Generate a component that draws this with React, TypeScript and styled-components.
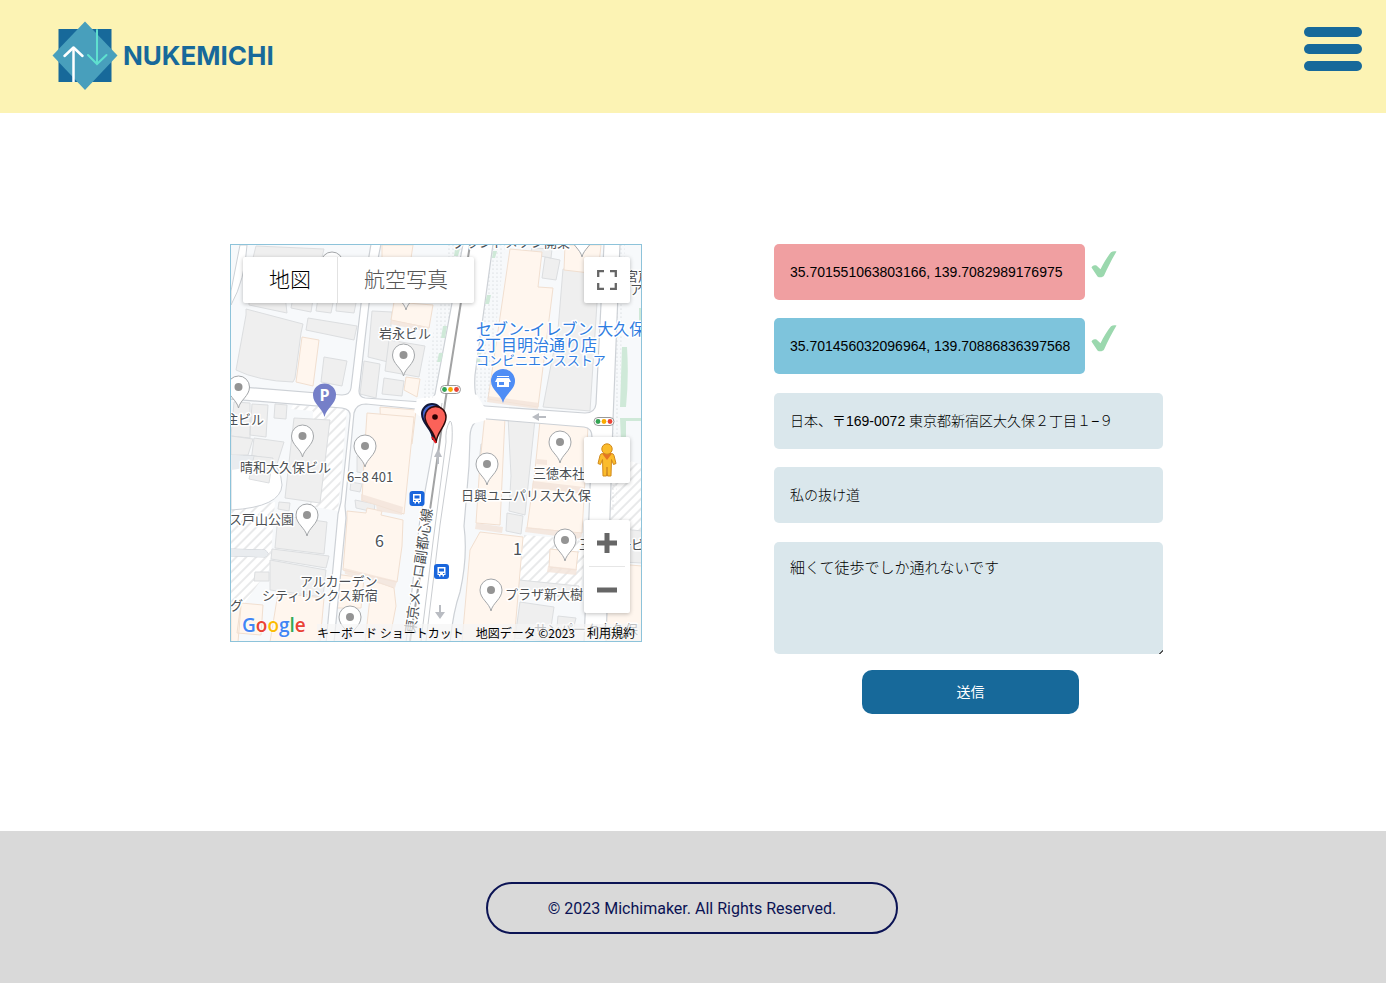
import React from "react";
import styled, { createGlobalStyle } from "styled-components";

const GlobalStyle = createGlobalStyle`
  * { box-sizing: border-box; }
  body { margin: 0; background: #fff; font-family: "Liberation Sans", "Noto Sans CJK JP", sans-serif; }
  button, input, textarea { font: inherit; }
`;

const Page = styled.div`
  min-height: 100vh;
  display: flex;
  flex-direction: column;
`;

const Header = styled.header`
  display: flex;
  justify-content: space-between;
  align-items: flex-start;
  padding: 21px 24px 22px 52px;
  background: #fcf3b4;
`;

const Brand = styled.a`
  display: flex;
  align-items: center;
  gap: 5px;
  color: #17699a;
  font: 700 26px/32px Inter, sans-serif;
  text-decoration: none;
  svg { display: block; }
`;

const MenuButton = styled.button`
  display: flex;
  flex-direction: column;
  gap: 7px;
  width: 58px;
  margin-top: 6px;
  padding: 0;
  border: 0;
  background: none;
  cursor: pointer;
`;

const MenuBar = styled.span`
  height: 10px;
  border-radius: 5px;
  background: #17699a;
`;

const Main = styled.main`
  flex: 1;
  display: grid;
  grid-template-columns: 412fr 389fr;
  align-items: start;
  gap: 132px;
  padding: 131px 223px 117px 230px;
  @media (max-width: 1000px) {
    grid-template-columns: 1fr;
    gap: 40px;
    padding: 40px 24px;
  }
`;

const MapFrame = styled.section`
  position: relative;
  height: 398px;
  border: 1px solid #8dc3da;
  overflow: hidden;
`;

const MapCanvas = styled.svg`
  display: block;
  width: 100%;
  height: 100%;
`;

const Controls = styled.div`
  position: absolute;
  display: flex;
  background: #fff;
  border-radius: 2px;
  box-shadow: 0 1px 4px rgba(0, 0, 0, 0.25);
`;

const TypeControls = styled(Controls)`
  top: 12px;
  left: 12px;
`;

const SideControls = styled(Controls)<{ $edge: "top" | "bottom"; $offset: number }>`
  right: 11px;
  ${(p) => p.$edge}: ${(p) => p.$offset}px;
  flex-direction: column;
`;

const TypeButton = styled.button<{ $active?: boolean }>`
  height: 46px;
  padding: 0 26px 5px;
  border: 0;
  border-left: ${(p) => (p.$active ? "0" : "1px solid #e2e2e2")};
  background: none;
  color: ${(p) => (p.$active ? "#000" : "#565656")};
  font: 300 21px/30px "Noto Sans CJK JP", sans-serif;
`;

const IconButton = styled.button`
  display: grid;
  place-items: center;
  width: 46px;
  height: 46px;
  padding: 0;
  border: 0;
  background: none;
`;

const ZoomDivider = styled.span`
  height: 1px;
  margin: 0 5px;
  background: #e6e6e6;
`;

const GoogleLink = styled.a`
  position: absolute;
  left: 11px;
  bottom: 2px;
  font: 600 19px/28px "Open Sans", sans-serif;
  text-decoration: none;
  text-shadow: 0 0 2px #fff, 0 0 2px #fff;
`;

const Letter = styled.span<{ $color: string }>`
  color: ${(p) => p.$color};
`;

const MapCredits = styled.div`
  position: absolute;
  right: 0;
  bottom: 0;
  display: flex;
  gap: 12px;
  padding: 0 6px 0 0;
  background: rgba(245, 245, 245, 0.7);
  font: 400 12px/17px "Noto Sans CJK JP", sans-serif;
  color: #000;
  white-space: nowrap;
  button { padding: 0; border: 0; background: none; }
  a { color: inherit; text-decoration: none; }
`;

const Form = styled.form`
  display: flex;
  flex-direction: column;
`;

const FieldGroup = styled.div`
  display: flex;
  flex-direction: column;
  gap: 18px;
  margin-bottom: 19px;
`;

const PointRow = styled.div`
  display: flex;
  align-items: flex-start;
  gap: 6px;
  svg { flex: none; margin-top: 7px; }
`;

const TextField = styled.input<{ $tone?: string; $short?: boolean }>`
  width: ${(p) => (p.$short ? "80%" : "100%")};
  height: 56px;
  padding: 0 15px 2px 16px;
  border: 0;
  border-radius: 5px;
  background: ${(p) => p.$tone || "#dae7ec"};
  color: #000;
  font-family: "Liberation Sans", "Noto Sans CJK JP", sans-serif;
  font-weight: 300;
  font-size: 14px;
  ${(p) => p.$short && "padding-bottom: 0;"}
`;

const Comment = styled.textarea`
  display: block;
  height: 112px;
  padding: 16px;
  border: 0;
  border-radius: 5px;
  background: #dae7ec;
  color: #000;
  font-weight: 300;
  font-size: 15px;
  line-height: 20px;
  resize: vertical;
  &::-webkit-resizer {
    background: linear-gradient(135deg, transparent 86%, #555 86%, #555 92%, transparent 92%);
  }
`;

const Actions = styled.div`
  display: flex;
  justify-content: center;
  padding: 16px 0 0 4px;
`;

const Submit = styled.button`
  width: 217px;
  height: 44px;
  padding: 0 0 2px;
  border: 0;
  border-radius: 10px;
  background: #17699a;
  color: #fff;
  font-size: 14px;
`;

const Footer = styled.footer`
  display: flex;
  justify-content: center;
  padding: 51px 2px 49px 0;
  background: #d9d9d9;
`;

const Copyright = styled.p`
  width: 412px;
  margin: 0;
  padding: 13px 0 11px;
  border: 2px solid #0b1354;
  border-radius: 26px;
  color: #0b1354;
  font: 400 16px/24px Roboto, sans-serif;
  text-align: center;
`;

const Place = styled.text<{ $size?: number; $color?: string }>`
  font: 400 ${(p) => p.$size || 13}px "Noto Sans CJK JP", sans-serif;
  fill: ${(p) => p.$color || "#4c4f53"};
  stroke: #fff;
  stroke-width: 3px;
  stroke-linejoin: round;
  paint-order: stroke;
`;

const Logo = () => (
  <svg width="66" height="70" viewBox="52 21 66 70" aria-hidden="true">
    <path fill="#17699a" d="M58.5 29h53v53h-53z" />
    <path fill="#489fbc" d="M85 21.500 117.500 55.500 85 90 52.500 55.500z" />
    <path fill="none" stroke="#5fe0cf" strokeWidth="2" strokeLinecap="round" d="M97 30v34M88 55l9 9 9.500-9" />
    <path fill="none" stroke="#fff" strokeWidth="2.500" d="M73.500 82V48" />
    <path fill="none" stroke="#fff" strokeWidth="2.500" strokeLinecap="round" strokeLinejoin="round" d="M64.500 56l9-8.500 9 8.500" />
  </svg>
);

const Check = () => (
  <svg width="26" height="27" viewBox="0 0 26 27" role="img" aria-label="OK">
    <path fill="#9bd8ae" d="M.5 16.500C1 14.500 3.500 13.500 5.500 14.600L9.500 18.300C12.500 12 16.500 5.500 20 1.200 21.800 0 24 0 25.500.6 21 8 17 16 13.200 24.300 12 26.500 8.500 27 6.500 25.500z" />
  </svg>
);

const Pin = ({ x, y }: { x: number; y: number }) => (
  <g transform={`translate(${x} ${y})`}>
    <path fill="#fff" stroke="#a3a6a9" d="M0 21C-1.500 13-11 9-11 0a11 11 0 0 1 22 0C11 9 1.500 13 0 21z" />
    <circle r="4" fill="#949494" />
  </g>
);

const Signal = ({ x, y }: { x: number; y: number }) => (
  <g transform={`translate(${x} ${y})`}>
    <rect x="-10" y="-4" width="20" height="8" rx="4" fill="#fff" stroke="#999" />
    <circle cx="-6" r="2.400" fill="#34a353" />
    <circle r="2.400" fill="#f9ab00" />
    <circle cx="6" r="2.400" fill="#ea4335" />
  </g>
);

const Station = ({ x, y }: { x: number; y: number }) => (
  <g transform={`translate(${x} ${y})`}>
    <rect x="-7.500" y="-7.500" width="15" height="15" rx="3" fill="#1a66dc" />
    <path fill="#fff" d="M-4-4.500h8v8h-1.500V5h-1.500V3.500h-2V5h-1.500V3.500H-4z" />
    <path fill="#1a66dc" d="M-2.500-3h5v3h-5zM-3 1.500h1.500v1H-3zM1.500 1.500H3v1H1.500z" />
  </g>
);

const pins = [
  [403.5, 355], [238.500, 387], [302.500, 436], [365, 446], [487, 464], [560, 442],
  [307, 515], [565, 540], [491, 590], [350, 617], [332, 263], [406, 289], [582, 236],
];

const grayBlocks = [
  "M256 246l68 3-3 12-68-3z", "M246 309l57 15-2 9-6 45-2 4q-35-1-57-12l10-55z",
  "M308 318l49 8-3 14-48-10z", "M324 357l23 4-5 25-21-4z",
  "M249 297l36-2 2 18-38-8zM294 293h20l-3 19-20-4zM318 298h16l-3 15-15-2zM337 298h20l-3 15-18-2z",
  "M372 311l20 1-4 50-20-5z", "M364 361l16 3-4 34-16-4z", "M389 340l36 6-6 31-34-6z",
  "M384 378l20 3-2 15-20-2z",
  "M234 402l16 1v35l-19-2zM252 404l16 1-2 32-16-2zM275 404l12 1-1 14-12-1z",
  "M294 418l36 2-10 83-35-5z", "M231 436l22 3-5 16-17 0zM254 438l30 4-13 41-22-5z",
  "M278 515l49 7-3 32-49-6z", "M272 549l57 7-3 12-55-9z", "M270 560l56 10-3 27-53-7z",
  "M255 572h14v9h-15z", "M563 269l36 3-9 139-47-4 7-37 8-40z",
  "M545 257l15 3-4 20-14-2z", "M532 248l20 1-1 9-21-4z",
  "M508 416l27 3-10 96-16-4 2-35z", "M507 513l16 3-2 18-15-3z",
  "M481 444l20 2-2 20-20-3z", "M519 580l60 6-2 12-59-6z", "M520 602l34 5-5 34-34-3zM558 616l18 2-3 12-16-3z",
  "M357 456l20 2-3 17-17-3z", "M605 527l37 4v32l-37-2z", "M355 500l20 4-1 8-18-4z", "M351 482l11 2-2 8-10-2z",
];
const orangeBlocks = [
  "M302 337l17 3-6 46-17-4z", "M382 245h31l-3 20-28-4z", "M394 302l39 3-4 23-38-8z",
  "M406 377l14 2-3 18-13-7z", "M380 407l36 3-4 34-31-6z", "M510 249l32 3-4 35 15 1-15 119-50-8z",
  "M565 245h36l-3 29-34-4z", "M367 413l47 4-10 97-42-14 2-40z", "M347 511l19 2 1-5 15 3-1 4 22 5-1 26-5 36-54-12 4-50z",
  "M372 580l22 8 2 18-7 36h-24z", "M335 574l29 4-3 30-30 0z", "M485 414l20 3-5 108-24-2 4-60z",
  "M540 421l48 5-6 107-55-5 8-58z", "M480 532l43 5-9 105h-52l8-92z", "M550 549l28 3-2 18-27-3z",
  "M241 603l22 2-2 30-24-2zM231 605l10 1-3 36h-7z", "M278 593l46 5-4 44h-50z", "M606 563l36 3v76h-40z",
];

const MapDrawing = () => (
  <MapCanvas viewBox="231 245 410 396" preserveAspectRatio="xMidYMid slice" role="img" aria-label="地図">
    <defs>
      <pattern id="hatch" width="7" height="7" patternUnits="userSpaceOnUse" patternTransform="rotate(45)">
        <path stroke="#d2d4d6" d="M1 0v7" />
      </pattern>
      <pattern id="dots" width="4" height="4" patternUnits="userSpaceOnUse">
        <circle cx="1" cy="1" r=".6" fill="#c5cace" />
      </pattern>
    </defs>
    <path fill="#f7f9fb" d="M231 245h411v397H231z" />
    <path fill="#fff" d="M293 405l54 4-9 102-28-5 3-95-22-2zM231 510l44-8-5 66-29 40-10-2zM524 535l62 5-5 48-62-8zM614 455l28 10v67l-33-5z" />
    <path fill="url(#hatch)" d="M293 405l54 4-9 102-28-5 3-95-22-2zM231 510l44-8-5 66-29 40-10-2zM524 535l62 5-5 48-62-8zM614 455l28 10v67l-33-5z" />
    <g fill="#efefef" stroke="#dcdee0">
      {grayBlocks.map((d) => <path key={d} d={d} />)}
    </g>
    <g fill="#fff6ee" stroke="#f1dfd0">
      {orangeBlocks.map((d) => <path key={d} d={d} />)}
    </g>
    <path fill="#f3e4d9" d="M391 320l38 7-1 5-38-8zM488 396l51 7-1 6-51-7zM476 523l27 4-1 6-27-4zM533 481l51 6-1 7-51-6zM526 527l56 6-1 6-56-7zM361 494l42 13-1 8-25-4-1-6-15-4zM344 568l53 13-2 7-50-14zM548 566l29 3-1 6-29-3zM537 459l10 1v5l-11-1z" opacity=".8" />
    <path fill="#fff" stroke="#cdd1d6" d="M240 245h7q-2 35-16 60v-14zM231 457q49-8 51 28-1 22-51 25zM231 549l34 1q6 4 0 7l-34-1z" />
    <path fill="#e9ecef" d="M231 470q30-4 22-14l-22-1zM231 549l34 1q6 4 0 7l-34-1z" />
    <path fill="#efefef" stroke="#dcdee0" d="M254 456l19 2-4 25-20-4zM279 502l11 1-1 8-11-2z" />
    <path
      fill="#fff"
      stroke="#cdd1d6"
      strokeWidth="1.200"
      d="M230 386l112 9q8 0 9-7l10-84 10-60h10l-12 60-10 87q0 6 6 7l57 4q10 0 13-8l28-150h30l-18 131q-2 30 10 31l100 7q10 0 11-9l8-160h16l-7 176-7 223h-22l8-206q0-9-8-10l-97-8q-16-1-17 17l-1 30-5 60q4 30-4 66-7 20-10 51h-44l14-124 14-77 2-20q0-12-10-12l-60-6q-10 0-12 9l-9 93 1 12-12 125h-8l12-129 3-12 9-85q1-8-8-9l-112-9z"
    />
    <path fill="#fff" d="M417 399l16-3 30-5 14 4 8 13 1 12-14 4-10 6-32-6-16-12z" />
    <path fill="url(#dots)" d="M448 245h15l-28 149q-3 8-13 7zM493 245h12l-17 158q-14-4-13-28zM619 245h6l-9 265h-5z" />
    <path fill="#cfe9d8" d="M622 347h5q2 30-1 60h-6zM620 418h22v3h-16v20h-5zM455 249h5l-2 7h-4zM493 251h4l-2 7h-3zM487 295h4l-2 9h-4zM443 326h4l-2 12h-4zM439 353h4l-2 9h-4zM478 353h3l-1 9h-3zM639 308h3v14h-3z" />
    <path fill="none" stroke="#a2a3a4" strokeWidth="2" d="M470 245l-25 158-6 44-9 63-20 131" />
    <path fill="none" stroke="#cacdd1" d="M450 421q3 0 2 21l-12 83-14 116M450 421q-5 8-4 21l-13 100-12 99M442 403l-3 18" />
    <path fill="#b9bcc2" d="M532 417l7-4v3h7v2h-7v3zM440 619l-5-7h4v-7h2v7h4zM438 449l4 8h-3v7h-2v-7h-3z" />
    <Place x="453" y="247">グランドメゾン開東</Place>
    {pins.map(([x, y]) => <Pin key={`${x}-${y}`} x={x} y={y} />)}
    <Place x="379" y="338">岩永ビル</Place>
    <Place x="225" y="424">住ビル</Place>
    <Place x="240" y="472">晴和大久保ビル</Place>
    <Place x="347" y="482">6−8 401</Place>
    <Place x="229" y="524">ス戸山公園</Place>
    <Place x="300" y="586">アルカーデン</Place>
    <Place x="262" y="600">シティリンクス新宿</Place>
    <Place x="230" y="610">グ</Place>
    <Place x="461" y="500">日興ユニパリス大久保</Place>
    <Place x="533" y="478">三徳本社</Place>
    <Place x="505" y="599">プラザ新大樹</Place>
    <Place x="579" y="549">三和第一ビル</Place>
    <Place x="625" y="281">宮戸</Place>
    <Place x="630" y="294">ア</Place>
    <Place x="534" y="634">サンパーク大久保</Place>
    <Place x="375" y="547" $size={16}>6</Place>
    <Place x="513" y="555" $size={16}>1</Place>
    <Place transform="translate(415 634) rotate(-82)" $size={14}>東京メトロ副都心線</Place>
    <Place x="476" y="335" $size={16} $color="#2f7de1">セブン-イレブン 大久保</Place>
    <Place x="476" y="351" $size={16} $color="#2f7de1">2丁目明治通り店</Place>
    <Place x="476" y="365" $color="#2f7de1">コンビニエンスストア</Place>
    <g transform="translate(503 381)">
      <path fill="#4f8df5" d="M0 22C-2 13-12 9-12 0a12 12 0 0 1 24 0C12 9 2 13 0 22z" />
      <path fill="#fff" d="M-6-5H6v1H-6zM-6-3H6l2 4H6v5h-12V1h-2zM-4 1v3h5V1z" fillRule="evenodd" />
    </g>
    <g transform="translate(324.500 395)">
      <path fill="#757fc8" d="M0 22C-2 13-11.500 9-11.500 0a11.500 11.500 0 0 1 23 0C11.500 9 2 13 0 22z" />
      <text y="6" textAnchor="middle" fill="#fff" fontFamily="Open Sans, sans-serif" fontSize="16" fontWeight="700">P</text>
    </g>
    <Signal x={450.5} y={389.5} />
    <Signal x={604} y={421.5} />
    <Station x={417} y={498.5} />
    <Station x={441.5} y={571.5} />
    <path fill="#4468d0" stroke="#10183d" strokeWidth="2" d="M433 440c0-12-11-15-11-26a10 10 0 0 1 20 0c0 11-9 14-9 26z" />
    <path fill="#fb6259" stroke="#300b0b" strokeWidth="1.500" d="M436 443c-1-13-11-16-11-26a10.500 10.500 0 0 1 21 0c0 10-9 14-10 26z" />
    <circle cx="435" cy="417" r="2.800" fill="#290000" />
    <path stroke="#e3151a" strokeWidth="2" d="M432 437l4 6" />
  </MapCanvas>
);

const googleLetters = [
  ["G", "#4285f4"], ["o", "#ea4335"], ["o", "#fbbc04"], ["g", "#4285f4"], ["l", "#34a853"], ["e", "#ea4335"],
];

export default function App() {
  return (
    <Page>
      <GlobalStyle />
      <Header>
        <Brand href="#"><Logo />NUKEMICHI</Brand>
        <MenuButton type="button" aria-label="メニュー"><MenuBar /><MenuBar /><MenuBar /></MenuButton>
      </Header>
      <Main>
        <MapFrame>
          <MapDrawing />
          <GoogleLink href="#" aria-label="Google">
            {googleLetters.map(([char, color], i) => <Letter key={i} $color={color}>{char}</Letter>)}
          </GoogleLink>
          <MapCredits>
            <button type="button">キーボード ショートカット</button>
            <span>地図データ ©2023</span>
            <a href="#">利用規約</a>
          </MapCredits>
          <TypeControls>
            <TypeButton type="button" $active>地図</TypeButton>
            <TypeButton type="button">航空写真</TypeButton>
          </TypeControls>
          <SideControls $edge="top" $offset={12}>
            <IconButton type="button" aria-label="全画面表示">
              <svg width="20" height="20" viewBox="0 0 20 20"><path fill="none" stroke="#666" strokeWidth="2.300" d="M1.200 7V1.200H7M13 1.200h5.800V7M18.800 13v5.800H13M7 18.800H1.200V13" /></svg>
            </IconButton>
          </SideControls>
          <SideControls $edge="bottom" $offset={158}>
            <IconButton type="button" aria-label="ストリートビュー">
              <svg width="20" height="34" viewBox="0 0 20 34">
                <path fill="#fbbc2c" stroke="#d18a1c" d="M5.500 10.500h9q2 0 2.500 2l2 8-2.500 1-2-5-.5 16.500h-3.500l-.5-9-.5 9H6L5.500 16.500l-2 5-2.500-1 2-8q.5-2 2.500-2z" />
                <path fill="#e57524" d="M5 10.500h10L10 17z" />
                <circle cx="10" cy="6" r="5.200" fill="#fbbc2c" stroke="#d18a1c" />
              </svg>
            </IconButton>
          </SideControls>
          <SideControls $edge="bottom" $offset={28}>
            <IconButton type="button" aria-label="拡大">
              <svg width="20" height="20" viewBox="0 0 20 20"><path fill="#666" d="M7.500 0h5v7.500H20v5h-7.500V20h-5v-7.500H0v-5h7.500z" /></svg>
            </IconButton>
            <ZoomDivider />
            <IconButton type="button" aria-label="縮小">
              <svg width="20" height="20" viewBox="0 0 20 20"><path fill="#666" d="M0 7.500h20v5H0z" /></svg>
            </IconButton>
          </SideControls>
        </MapFrame>
        <Form onSubmit={(e) => e.preventDefault()}>
          <FieldGroup>
            <PointRow>
              <TextField aria-label="始点" $short $tone="#f09fa1" defaultValue="35.701551063803166, 139.7082989176975" />
              <Check />
            </PointRow>
            <PointRow>
              <TextField aria-label="終点" $short $tone="#7ec4dc" defaultValue="35.701456032096964, 139.70886836397568" />
              <Check />
            </PointRow>
          </FieldGroup>
          <FieldGroup>
            <TextField aria-label="住所" defaultValue="日本、〒169-0072 東京都新宿区大久保２丁目１−９" />
            <TextField aria-label="タイトル" defaultValue="私の抜け道" />
          </FieldGroup>
          <Comment aria-label="コメント" defaultValue="細くて徒歩でしか通れないです" />
          <Actions><Submit type="submit">送信</Submit></Actions>
        </Form>
      </Main>
      <Footer><Copyright>© 2023 Michimaker. All Rights Reserved.</Copyright></Footer>
    </Page>
  );
}
